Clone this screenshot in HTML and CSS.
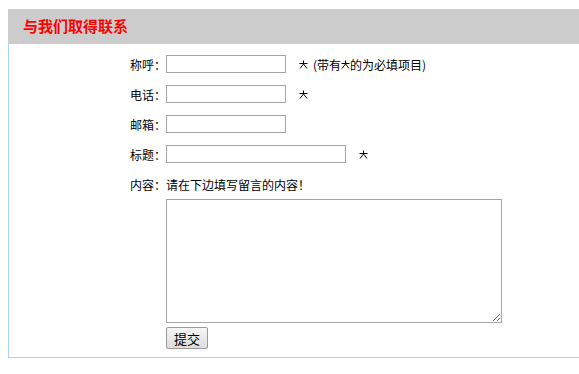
FILE: index.html
```html
<!DOCTYPE html>
<html lang="zh-CN">
<head>
    <meta charset="UTF-8">
    <meta name="viewport" content="width=device-width, initial-scale=1.0">
    <title>与我们取得联系</title>
    <link rel="stylesheet" href="styles.css">
</head>
<body>
    <div class="contact-box">
        <div class="contact-title">与我们取得联系</div>
        <form class="contact-form">
            <label class="field-label">称呼：</label>
            <div class="field">
                <input type="text" class="input">
                <svg class="star required" viewBox="0 0 9 9"><path d="M4.5 0.5V4M0.5 3.5H8.5M4.5 4L1 8.5M4.5 4L8 8.5"/></svg>
                <span class="note">(带有<svg class="star" viewBox="0 0 9 9"><path d="M4.5 0.5V4M0.5 3.5H8.5M4.5 4L1 8.5M4.5 4L8 8.5"/></svg>的为必填项目)</span>
            </div>

            <label class="field-label">电话：</label>
            <div class="field">
                <input type="text" class="input">
                <svg class="star required" viewBox="0 0 9 9"><path d="M4.5 0.5V4M0.5 3.5H8.5M4.5 4L1 8.5M4.5 4L8 8.5"/></svg>
            </div>

            <label class="field-label">邮箱：</label>
            <div class="field">
                <input type="text" class="input">
            </div>

            <label class="field-label">标题：</label>
            <div class="field">
                <input type="text" class="input input-wide">
                <svg class="star required" viewBox="0 0 9 9"><path d="M4.5 0.5V4M0.5 3.5H8.5M4.5 4L1 8.5M4.5 4L8 8.5"/></svg>
            </div>

            <label class="field-label">内容：</label>
            <div class="field">请在下边填写留言的内容！</div>

            <div class="field field-full">
                <textarea class="message"></textarea>
                <button type="button" class="btn-submit">提交</button>
            </div>
        </form>
    </div>
</body>
</html>
```

FILE: styles.css
```css
:root {
    --border-blue: #a6d4f8;
    --title-bg: #cccccc;
    --input-border: #a5a5a5;
}

html {
    overflow-x: hidden;
}

body {
    margin: 9px 0 0 8px;
    font-family: "Noto Sans CJK SC", "Liberation Sans", sans-serif;
    font-size: 12px;
    color: #000;
}

.contact-box {
    width: 600px;
}

.contact-title {
    background: var(--title-bg);
    height: 34px;
    line-height: 34px;
    padding-left: 15px;
    color: #ff0000;
    font-size: 15px;
    font-weight: bold;
}

.contact-form {
    border: 1px solid var(--border-blue);
    border-right: none;
    display: grid;
    grid-template-columns: 157px 1fr;
    grid-auto-rows: 30px;
    align-items: center;
    padding: 5px 0 8px;
}

.field-label {
    text-align: right;
}

.field {
    display: flex;
    align-items: center;
}

.field-full {
    grid-column: 2;
    flex-direction: column;
    align-items: flex-start;
    gap: 4px;
    align-self: start;
}

.contact-form .field-full {
    grid-row: span 5;
    height: 150px;
}

.input {
    box-sizing: border-box;
    width: 120px;
    height: 18px;
    margin: 0;
    border: 1px solid var(--input-border);
    padding: 0 2px;
    font: inherit;
}

.input-wide {
    width: 180px;
}

.star {
    width: 9px;
    height: 9px;
    fill: none;
    stroke: #000;
    stroke-width: 1;
    vertical-align: -1px;
}

.required {
    margin: 0 5px 0 13px;
}

.note {
    display: flex;
    align-items: center;
}

.message {
    box-sizing: border-box;
    width: 336px;
    height: 124px;
    margin: 0;
    border: 1px solid var(--input-border);
    resize: both;
    font: inherit;
}

.btn-submit {
    box-sizing: border-box;
    width: 42px;
    height: 22px;
    padding: 0;
    border: 1px solid #9a9a9a;
    border-radius: 2px;
    background: linear-gradient(#f6f6f6, #dddddd);
    font: inherit;
    font-size: 13px;
    color: #000;
}
```
